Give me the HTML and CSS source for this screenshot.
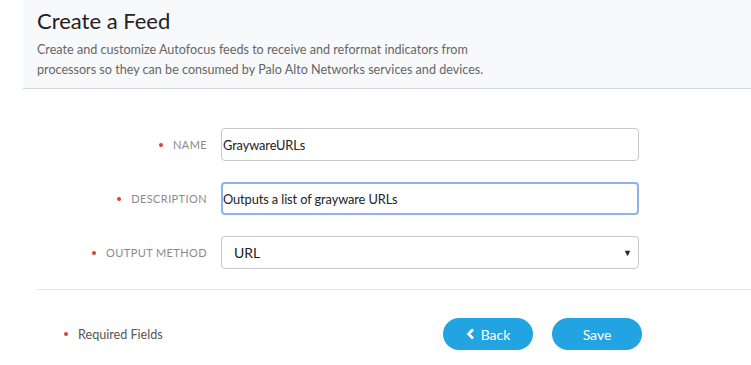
FILE: index.html
```html
<!DOCTYPE html>
<html lang="en">
<head>
    <meta charset="UTF-8">
    <title>Create a Feed</title>
    <link rel="stylesheet" href="styles.css">
</head>
<body>
    <div class="page">
        <div class="header">
            <h1>Create a Feed</h1>
            <p>Create and customize Autofocus feeds to receive and reformat indicators from<br>processors so they can be consumed by Palo Alto Networks services and devices.</p>
        </div>
        <form class="feed-form">
            <div class="row">
                <label for="name" class="required">Name</label>
                <input type="text" id="name" value="GraywareURLs">
            </div>
            <div class="row">
                <label for="description" class="required">Description</label>
                <input type="text" id="description" class="focused" value="Outputs a list of grayware URLs">
            </div>
            <div class="row">
                <label for="output" class="required">Output Method</label>
                <div class="select">
                    <span>URL</span>
                    <span class="arrow">&#9660;</span>
                </div>
            </div>
        </form>
        <div class="footer">
            <div class="legend"><span class="dot"></span>Required Fields</div>
            <div class="actions">
                <button type="button" class="btn">
                    <svg width="9" height="12" viewBox="0 0 9 12"><path d="M7 1.5 L2.5 6 L7 10.5" fill="none" stroke="#fff" stroke-width="2.6"/></svg>
                    Back
                </button>
                <button type="button" class="btn">Save</button>
            </div>
        </div>
    </div>
</body>
</html>
```
FILE: styles.css
```css
body {
    margin: 0;
    font-family: Lato, "Open Sans", sans-serif;
    background: #fff;
    color: #333;
}

.header {
    margin-left: 23px;
    height: 89px;
    box-sizing: border-box;
    padding: 7px 14px 0;
    background: #f8f9fb;
    border-bottom: 1px solid #d2d5d7;
}

.header h1 {
    margin: 0;
    font-size: 22px;
    font-weight: normal;
    color: #222;
    line-height: 28px;
}

.header p {
    margin: 5px 0 0;
    font-size: 12.6px;
    line-height: 20px;
    color: #666;
}

.feed-form {
    margin-left: 36px;
    padding: 39px 0 20px;
    border-bottom: 1px solid #e4e4e4;
    display: flex;
    flex-direction: column;
    gap: 21px;
}

.row {
    display: flex;
    align-items: center;
}

.row label {
    width: 171px;
    text-align: right;
    margin-right: 14px;
    font-size: 11px;
    letter-spacing: 0.4px;
    text-transform: uppercase;
    color: #8a8a8a;
}

.required::before,
.dot {
    content: "";
    display: inline-block;
    width: 4px;
    height: 4px;
    border-radius: 50%;
    background: #d9413c;
    vertical-align: middle;
    margin: 0 10px 2px 0;
}

.row input,
.select {
    width: 418px;
    height: 33px;
    box-sizing: border-box;
    border: 1px solid #c8c8c8;
    border-radius: 4px;
    color: #222;
    background: #fff;
}

.row input {
    padding: 0 1px;
    font-family: Lato, sans-serif;
    font-size: 12.8px;
    letter-spacing: -0.1px;
}

.row input.focused {
    border: 2px solid #8db3ec;
    padding: 0;
    outline: none;
}

.select {
    display: flex;
    align-items: center;
    justify-content: space-between;
    padding: 0 6px 0 12px;
    font-size: 14px;
}

.select .arrow {
    font-size: 9px;
    color: #222;
}

.footer {
    display: flex;
    align-items: center;
    padding: 28px 0 0 64px;
}

.legend {
    width: 379px;
    font-size: 12.6px;
    color: #555;
}

.dot {
    margin-right: 10px;
}

.actions {
    display: flex;
    gap: 19px;
}

.btn {
    height: 32px;
    width: 90px;
    border: none;
    border-radius: 16px;
    background: #23a4e2;
    color: #fff;
    font-family: Lato, sans-serif;
    font-size: 14px;
    display: flex;
    align-items: center;
    justify-content: center;
    gap: 6px;
}
```
